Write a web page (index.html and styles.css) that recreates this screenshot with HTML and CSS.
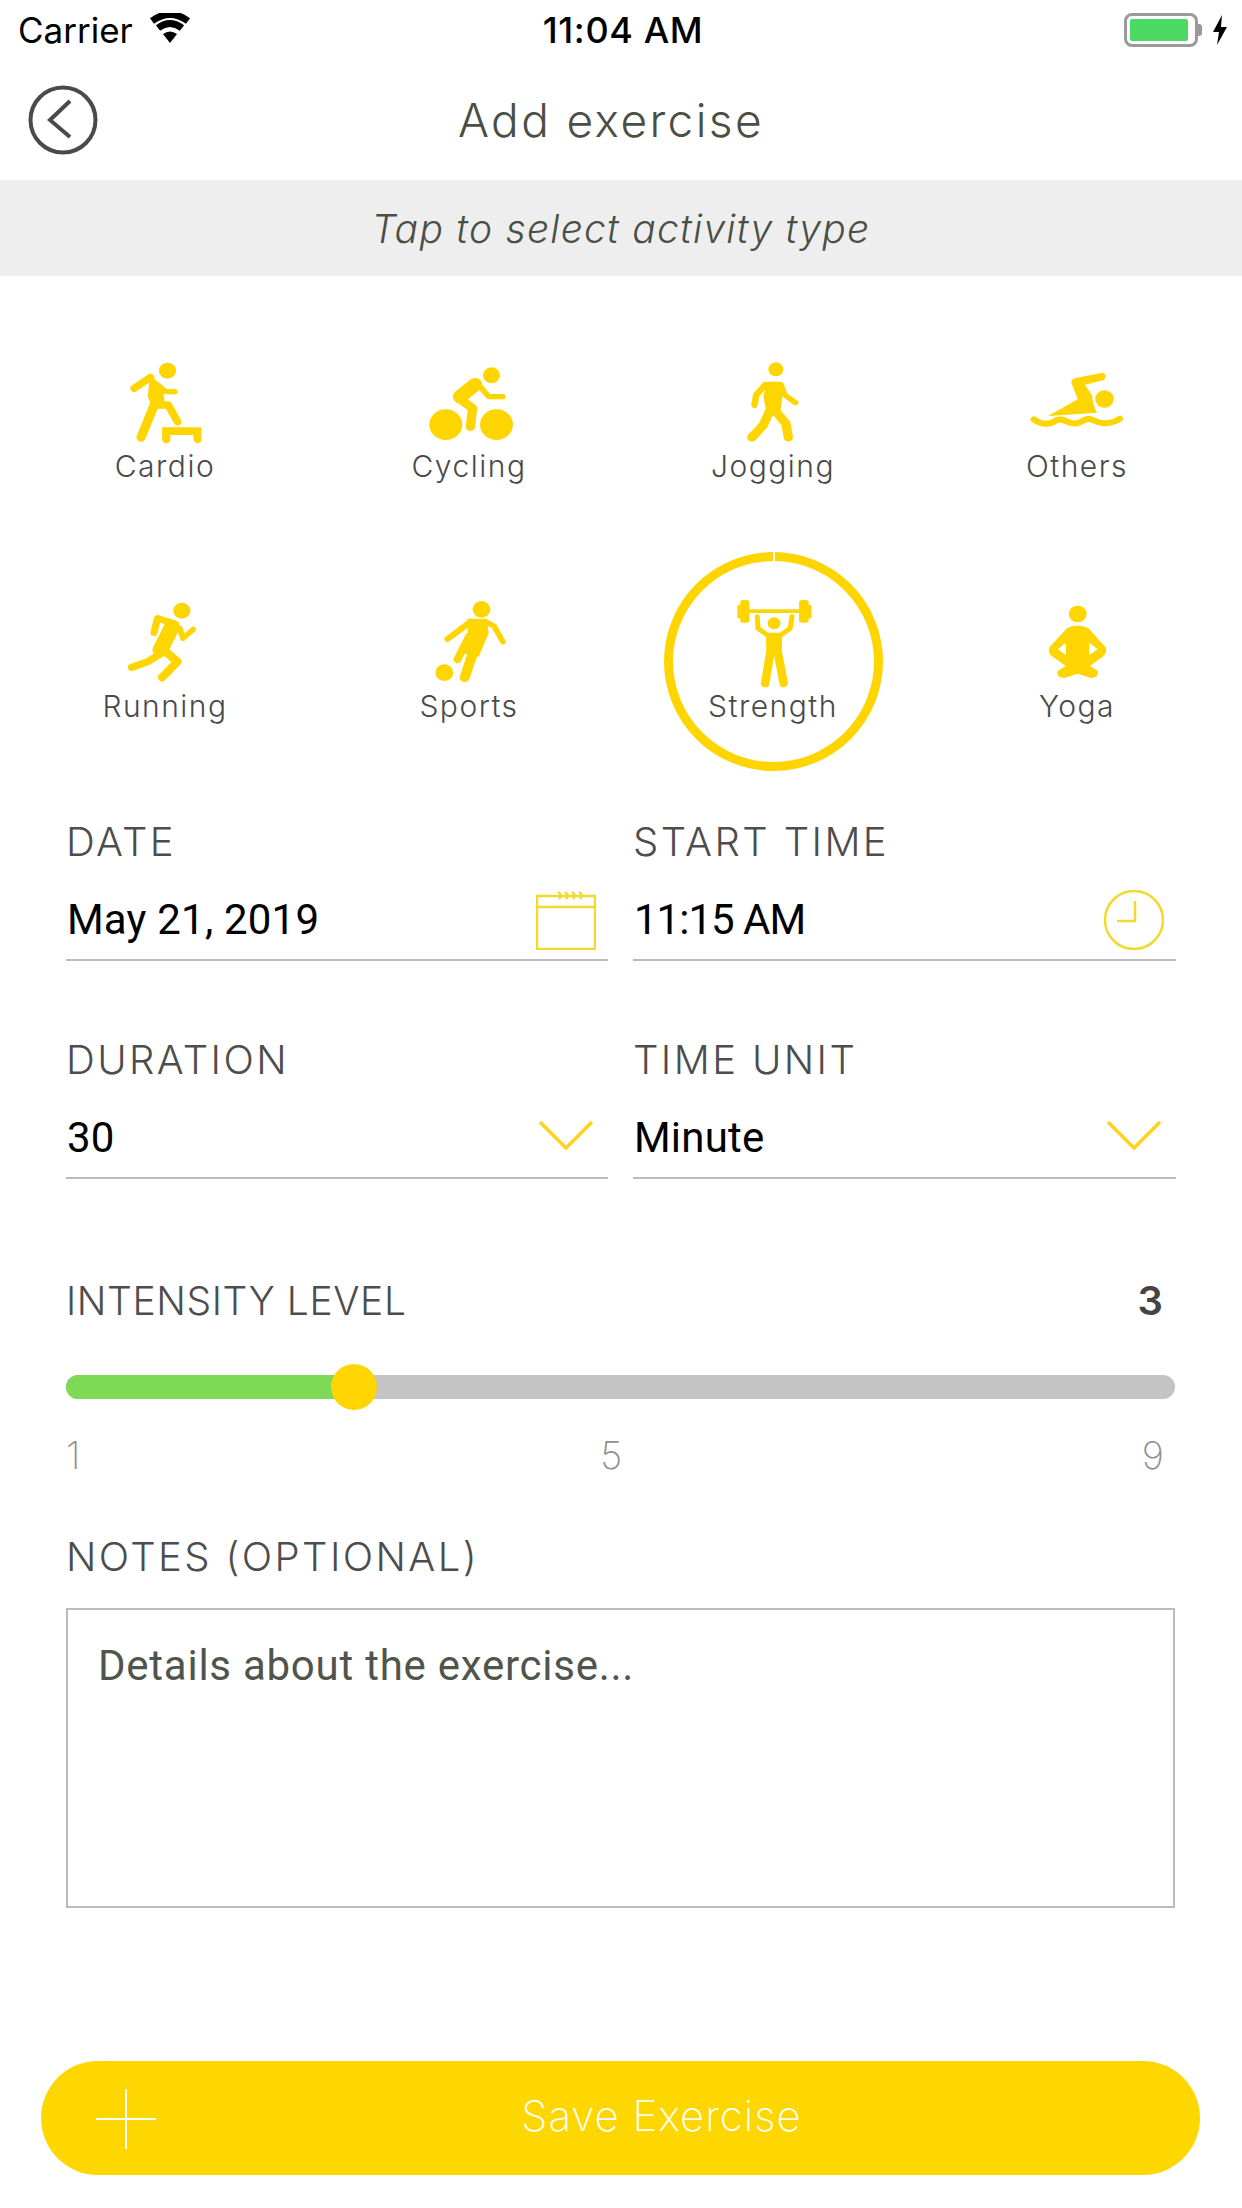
FILE: index.html
```html
<!DOCTYPE html>
<html lang="en">
<head>
<meta charset="utf-8">
<title>Add exercise</title>
<link rel="stylesheet" href="styles.css">
</head>
<body>
<main class="page">
  <div class="status">
    <div class="status-left">
      <span class="carrier">Carrier</span>
      <svg class="wifi" viewBox="0 0 42 30"><path d="M21 30 L14 21 Q21 16 28 21 Z"/><path class="wifi-arc" d="M9 15 Q21 6 33 15"/><path class="wifi-arc" d="M3 8 Q21 -5 39 8"/></svg>
    </div>
    <span class="clock-text">11:04 AM</span>
    <div class="status-right">
      <div class="battery"><div class="battery-fill"></div></div>
      <div class="battery-tip"></div>
      <svg class="bolt" viewBox="0 0 16 30"><path d="M10 0 L1 17 H7 L5 30 L15 12 H9 Z"/></svg>
    </div>
  </div>

  <header class="topbar">
    <svg class="back" viewBox="0 0 70 70"><circle cx="35" cy="35" r="32.5"/><path d="M42 16 L22 35 L42 52"/></svg>
    <h1 class="title">Add exercise</h1>
  </header>

  <div class="hint">Tap to select activity type</div>

  <section class="types">
    <div class="type">
      <svg class="type-icon" viewBox="153 60 280 264" preserveAspectRatio="none">
        <circle cx="300" cy="92" r="24"/>
        <polygon points="250,108 285,135 292,185 262,215 245,170"/>
        <path class="w22" d="M207 145 L252 112"/>
        <path class="w26" d="M226 292 L272 170"/>
        <path class="w16" d="M265 130 L295 155 L320 155"/>
        <path class="w22" d="M275 195 L302 195 L328 245"/>
        <path d="M285 262 H395 V298 Q395 310 383 310 Q372 310 372 285 H308 V298 Q308 310 296 310 Q285 310 285 295 Z"/>
      </svg>
      <span class="type-label">Cardio</span>
    </div>
    <div class="type">
      <svg class="type-icon" viewBox="1005 60 280 264" preserveAspectRatio="none">
        <circle cx="1208" cy="106" r="24"/>
        <circle cx="1080" cy="254" r="46"/>
        <circle cx="1222" cy="254" r="46"/>
        <path class="w40" d="M1120 170 L1162 134"/>
        <path class="w16" d="M1170 132 L1200 170 H1240"/>
        <path class="w26" d="M1118 175 L1155 205 L1149 260"/>
      </svg>
      <span class="type-label">Cycling</span>
    </div>
    <div class="type">
      <svg class="type-icon" viewBox="232 60 280 264" preserveAspectRatio="none">
        <circle cx="380" cy="88" r="21"/>
        <polygon points="355,125 395,125 398,170 392,225 355,225 345,170"/>
        <path class="w18" d="M350 135 L325 165 L320 195"/>
        <path class="w16" d="M395 135 L405 165 L435 188"/>
        <path class="w26" d="M362 215 L345 255 L313 292"/>
        <path class="w26" d="M380 215 L408 250 L415 292"/>
      </svg>
      <span class="type-label">Jogging</span>
    </div>
    <div class="type">
      <svg class="type-icon" viewBox="1086 60 280 264" preserveAspectRatio="none">
        <circle cx="1303" cy="177" r="26"/>
        <path d="M1298 98 Q1312 105 1302 120 L1248 134 L1268 166 Q1270 195 1282 218 L1145 228 L1228 178 L1210 128 Q1210 118 1222 114 Z"/>
        <path class="wave" d="M1105 238 C1125 255 1150 255 1168 241 C1185 230 1205 255 1225 250 C1245 245 1250 230 1270 240 C1290 252 1320 255 1346 236"/>
      </svg>
      <span class="type-label">Others</span>
    </div>
    <div class="type">
      <svg class="type-icon" viewBox="153 780 280 264" preserveAspectRatio="none">
        <circle cx="340" cy="812" r="24"/>
        <path class="w20" d="M262 878 L272 835 L322 852"/>
        <path class="w16" d="M335 865 L343 895 L372 868"/>
        <path class="w44" d="M312 862 L280 930"/>
        <path class="w22" d="M275 945 L245 965 L200 982"/>
        <path class="w24" d="M295 935 L328 965 L285 1012"/>
      </svg>
      <span class="type-label">Running</span>
    </div>
    <div class="type">
      <svg class="type-icon" viewBox="1005 780 280 264" preserveAspectRatio="none">
        <circle cx="1180" cy="808" r="25"/>
        <circle cx="1076" cy="998" r="25"/>
        <polygon points="1140,836 1195,836 1200,880 1172,950 1125,940 1142,880"/>
        <path class="w18" d="M1150 845 L1085 897"/>
        <path class="w16" d="M1190 845 L1215 858 L1240 905"/>
        <path class="w28" d="M1168 900 L1133 1012"/>
        <path class="w22" d="M1145 890 L1113 958"/>
      </svg>
      <span class="type-label">Sports</span>
    </div>
    <div class="type is-selected">
      <svg class="type-icon" viewBox="232 780 280 264" preserveAspectRatio="none">
        <rect x="280" y="780" width="26" height="68" rx="8"/>
        <rect x="272" y="795" width="10" height="40" rx="2"/>
        <rect x="445" y="780" width="27" height="68" rx="8"/>
        <rect x="470" y="795" width="10" height="40" rx="2"/>
        <rect x="300" y="808" width="150" height="11"/>
        <circle cx="375" cy="850" r="18"/>
        <path class="w14" d="M328 830 L330 865 L360 888"/>
        <path class="w14" d="M425 830 L420 865 L390 888"/>
        <polygon points="352,878 398,878 396,950 354,950"/>
        <path class="w24" d="M364 940 L350 1030"/>
        <path class="w24" d="M386 940 L402 1030"/>
      </svg>
      <span class="type-label">Strength</span>
    </div>
    <div class="type">
      <svg class="type-icon" viewBox="1086 780 280 264" preserveAspectRatio="none">
        <circle cx="1228" cy="822" r="25"/>
        <path fill-rule="evenodd" d="M1198 865 Q1228 848 1258 865 L1306 922 Q1312 938 1298 950 L1262 978 L1284 992 Q1290 1010 1265 1014 L1228 1001 L1190 1014 Q1165 1010 1172 992 L1195 978 L1158 950 Q1142 938 1150 920 Z M1172 928 L1195 945 L1195 908 Z M1284 928 L1260 908 L1260 945 Z"/>
      </svg>
      <span class="type-label">Yoga</span>
    </div>
  </section>

  <section class="fields">
    <div class="field">
      <div class="field-label">DATE</div>
      <div class="field-value">
        <span>May 21, 2019</span>
        <svg class="field-icon" viewBox="0 0 60 60"><rect x="1" y="6" width="58" height="53"/><path d="M1 17 H59"/><path d="M22 2 q5 3 1 7 M29 2 q5 3 1 7 M36 2 q5 3 1 7 M43 2 q5 3 1 7"/></svg>
      </div>
    </div>
    <div class="field">
      <div class="field-label">START TIME</div>
      <div class="field-value">
        <span class="time-value">11:15 AM</span>
        <svg class="field-icon" viewBox="0 0 60 60"><circle cx="30" cy="30" r="29"/><path d="M31 11 V31 H13"/></svg>
      </div>
    </div>
    <div class="field">
      <div class="field-label">DURATION</div>
      <div class="field-value">
        <span>30</span>
        <svg class="chevron" viewBox="0 0 56 30"><path d="M2 2 L28 28 L54 2"/></svg>
      </div>
    </div>
    <div class="field">
      <div class="field-label">TIME UNIT</div>
      <div class="field-value">
        <span>Minute</span>
        <svg class="chevron" viewBox="0 0 56 30"><path d="M2 2 L28 28 L54 2"/></svg>
      </div>
    </div>
  </section>

  <section class="intensity">
    <div class="intensity-head">
      <span class="field-label intensity-label">INTENSITY LEVEL</span>
      <span class="intensity-value">3</span>
    </div>
    <div class="track">
      <div class="track-fill"></div>
      <div class="thumb"></div>
    </div>
    <div class="ticks"><span>1</span><span>5</span><span>9</span></div>
  </section>

  <section class="notes">
    <div class="field-label">NOTES (OPTIONAL)</div>
    <div class="notes-box">Details about the exercise...</div>
  </section>

  <button class="save" type="button">
    <svg class="plus" viewBox="0 0 60 60"><path d="M30 0 V60 M0 30 H60"/></svg>
    <span>Save Exercise</span>
  </button>
</main>
</body>
</html>
```
FILE: styles.css
```css
* { box-sizing: border-box; }
html, body { margin: 0; padding: 0; background: #fff; }
.page {
  width: 1242px;
  height: 2208px;
  overflow: hidden;
  font-family: Inter, "Liberation Sans", sans-serif;
  color: #4a4a4a;
}

/* status bar */
.status {
  height: 60px;
  padding: 0 14px 0 18px;
  display: flex;
  align-items: center;
  justify-content: space-between;
  color: #000;
}
.status-left { width: 420px; display: flex; align-items: center; gap: 16px; }
.carrier { font-size: 35px; }
.wifi { width: 42px; height: 30px; margin-top: -4px; }
.wifi path { fill: #000; }
.wifi .wifi-arc { fill: none; stroke: #000; stroke-width: 7; }
.clock-text { font-size: 36px; font-weight: 500; letter-spacing: 0.6px; }
.status-right { width: 420px; display: flex; align-items: center; justify-content: flex-end; }
.battery {
  width: 74px;
  height: 34px;
  border: 3px solid #9a9a9a;
  border-radius: 8px;
  padding: 3px;
  background: #fff;
}
.battery-fill { width: 58px; height: 100%; background: #4cd964; border-radius: 2px; }
.battery-tip { width: 4px; height: 12px; background: #9a9a9a; border-radius: 0 3px 3px 0; margin-right: 10px; }
.bolt { width: 16px; height: 30px; fill: #000; }

/* header */
.topbar {
  height: 120px;
  padding: 0 118px 0 28px;
  display: flex;
  align-items: center;
}
.back { width: 70px; height: 70px; flex: none; fill: none; stroke: #4a4a4a; stroke-width: 4; }
.title {
  flex: 1;
  margin: 0;
  text-align: center;
  font-size: 46px;
  font-weight: 300;
  color: #4a4f46;
  letter-spacing: 2.4px;
}
.hint {
  height: 96px;
  background: #eeeeee;
  display: flex;
  align-items: center;
  justify-content: center;
  font-size: 39px;
  font-weight: 300;
  font-style: italic;
  letter-spacing: 1.25px;
  color: #4a4f46;
}

/* activity grid */
.types {
  padding: 84px 13px 0;
  display: grid;
  grid-template-columns: repeat(4, 304px);
  grid-auto-rows: 136px;
  row-gap: 104px;
}
.type {
  position: relative;
  display: flex;
  flex-direction: column;
  align-items: center;
}
.type-icon { width: 100px; height: 88px; margin-bottom: -2px; fill: #ffd500; flex: none; }
.type-icon path[class] { fill: none; stroke: #ffd500; stroke-linecap: round; stroke-linejoin: round; }
.w14 { stroke-width: 14; }
.w16 { stroke-width: 16; }
.w18 { stroke-width: 18; }
.w20 { stroke-width: 20; }
.w22 { stroke-width: 22; }
.w24 { stroke-width: 24; }
.w26 { stroke-width: 26; }
.w28 { stroke-width: 28; }
.w40 { stroke-width: 40; }
.w44 { stroke-width: 44; }
.type-icon .wave { stroke-width: 18; stroke-linecap: butt; }
.type-label {
  font-size: 30px;
  line-height: 40px;
  font-weight: 300;
  letter-spacing: 1.5px;
  color: #4a4a4a;
}
.is-selected::before {
  content: "";
  position: absolute;
  left: 43px;
  top: -48px;
  width: 201px;
  height: 201px;
  border: 9px solid #ffd500;
  border-radius: 50%;
}
.is-selected::after {
  content: "";
  position: absolute;
  left: 152px;
  top: -48px;
  width: 2px;
  height: 9px;
  background: #fff;
}

/* form fields */
.fields {
  margin-top: 82px;
  padding: 0 66px;
  display: grid;
  grid-template-columns: 542px 543px;
  column-gap: 25px;
  row-gap: 75px;
}
.field-label {
  font-size: 40px;
  line-height: 48px;
  font-weight: 300;
  color: #4d4d4d;
  letter-spacing: 2.4px;
}
.intensity-label { font-size: 39px; letter-spacing: 0.6px; }
.field-value {
  margin-top: 14px;
  height: 81px;
  padding: 0 12px 0 1px;
  border-bottom: 2px solid #bbbbbb;
  display: flex;
  align-items: center;
  justify-content: space-between;
  font-family: Roboto, "Liberation Sans", sans-serif;
  font-size: 42px;
  letter-spacing: 0.2px;
  color: #000;
}
.time-value { letter-spacing: -1px; }
.field-icon { width: 60px; height: 60px; fill: none; stroke: #f2d92e; stroke-width: 2.5; }
.chevron { width: 56px; height: 30px; fill: none; stroke: #ffd21f; stroke-width: 3.5; margin-right: 2px; margin-top: -6px; }

/* intensity */
.intensity { margin-top: 97px; padding: 0 67px 0 66px; }
.intensity-head { display: flex; justify-content: space-between; align-items: center; padding-right: 12px; }
.intensity-value { font-size: 40px; font-weight: 600; color: #444; }
.track {
  position: relative;
  margin-top: 50px;
  height: 24px;
  border-radius: 12px;
  background: #c4c4c4;
}
.track-fill { width: 280px; height: 100%; background: #7ed957; border-radius: 12px 0 0 12px; }
.thumb {
  position: absolute;
  left: 265px;
  top: -11px;
  width: 46px;
  height: 46px;
  border-radius: 50%;
  background: #ffd500;
}
.ticks {
  margin-top: 34px;
  padding-right: 11px;
  display: flex;
  justify-content: space-between;
  font-size: 38px;
  line-height: 44px;
  font-weight: 200;
  color: #8f8f8f;
}

/* notes */
.notes { margin-top: 56px; padding: 0 67px 0 66px; }
.notes-box {
  margin-top: 27px;
  height: 300px;
  border: 2px solid #bbbbbb;
  padding: 30px 30px;
  font-family: Roboto, "Liberation Sans", sans-serif;
  font-size: 42px;
  line-height: 52px;
  letter-spacing: 0.75px;
  color: #50554c;
}

/* save */
.save {
  margin: 153px 0 0 41px;
  width: 1159px;
  height: 114px;
  border: 0;
  padding: 0 0 5px 82px;
  border-radius: 57px;
  background: #ffd700;
  position: relative;
  display: flex;
  align-items: center;
  justify-content: center;
  font-family: Inter, "Liberation Sans", sans-serif;
  font-size: 42px;
  font-weight: 200;
  letter-spacing: 1px;
  color: #fff;
}
.plus { position: absolute; left: 55px; top: 28px; width: 60px; height: 60px; stroke: #fff; stroke-width: 2; fill: none; }
```
